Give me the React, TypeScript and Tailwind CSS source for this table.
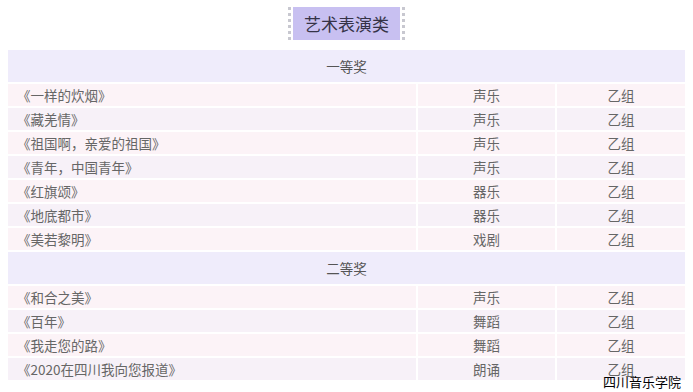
const groups = [
  {
    title: "一等奖",
    rows: [
      ["《一样的炊烟》", "声乐", "乙组"],
      ["《藏羌情》", "声乐", "乙组"],
      ["《祖国啊，亲爱的祖国》", "声乐", "乙组"],
      ["《青年，中国青年》", "声乐", "乙组"],
      ["《红旗颂》", "器乐", "乙组"],
      ["《地底都市》", "器乐", "乙组"],
      ["《美若黎明》", "戏剧", "乙组"],
    ],
  },
  {
    title: "二等奖",
    rows: [
      ["《和合之美》", "声乐", "乙组"],
      ["《百年》", "舞蹈", "乙组"],
      ["《我走您的路》", "舞蹈", "乙组"],
      ["《2020在四川我向您报道》", "朗诵", "乙组"],
    ],
  },
];

export default function App() {
  return (
    <div
      className="relative h-[392px] w-[693px] overflow-hidden bg-white"
      style={{ fontFamily: '"Noto Sans CJK SC", "Noto Sans", sans-serif' }}
    >
      <div className="flex justify-center pt-[7px]">
        <div className="flex items-stretch gap-[2px]">
          <span className="w-0 border-l-[3px] border-dotted border-[#c8c8d0]" />
          <h2 className="flex h-[33px] w-[107px] items-center justify-center bg-[#c8c0f1] text-[17px] font-normal text-[#353347]">
            艺术表演类
          </h2>
          <span className="w-0 border-l-[3px] border-dotted border-[#c8c8d0]" />
        </div>
      </div>

      <div className="mx-2 mt-[10px] flex w-[677px] flex-col gap-[2px] text-[13.5px] text-[#666]">
        {groups.map((g) => (
          <div key={g.title} className="flex flex-col gap-[2px]">
            <div className="flex h-[32px] items-center justify-center bg-[#efecfb] text-[#555]">
              {g.title}
            </div>
            {g.rows.map((r, i) => (
              <div key={r[0]} className="grid h-[22px] grid-cols-[408px_137px_1fr] gap-[2px]">
                <div className={`flex items-center pl-[9px] ${i % 2 === 0 ? "bg-[#fcf3f7]" : "bg-[#f7f1f8]"}`}>{r[0]}</div>
                <div className={`flex items-center justify-center ${i % 2 === 0 ? "bg-[#fcf3f7]" : "bg-[#f7f1f8]"}`}>{r[1]}</div>
                <div className={`flex items-center justify-center ${i % 2 === 0 ? "bg-[#fcf3f7]" : "bg-[#f7f1f8]"}`}>{r[2]}</div>
              </div>
            ))}
          </div>
        ))}
      </div>

      <div className="absolute bottom-[4px] right-[12px] text-[13px] leading-none text-black">
        四川音乐学院
      </div>
    </div>
  );
}
